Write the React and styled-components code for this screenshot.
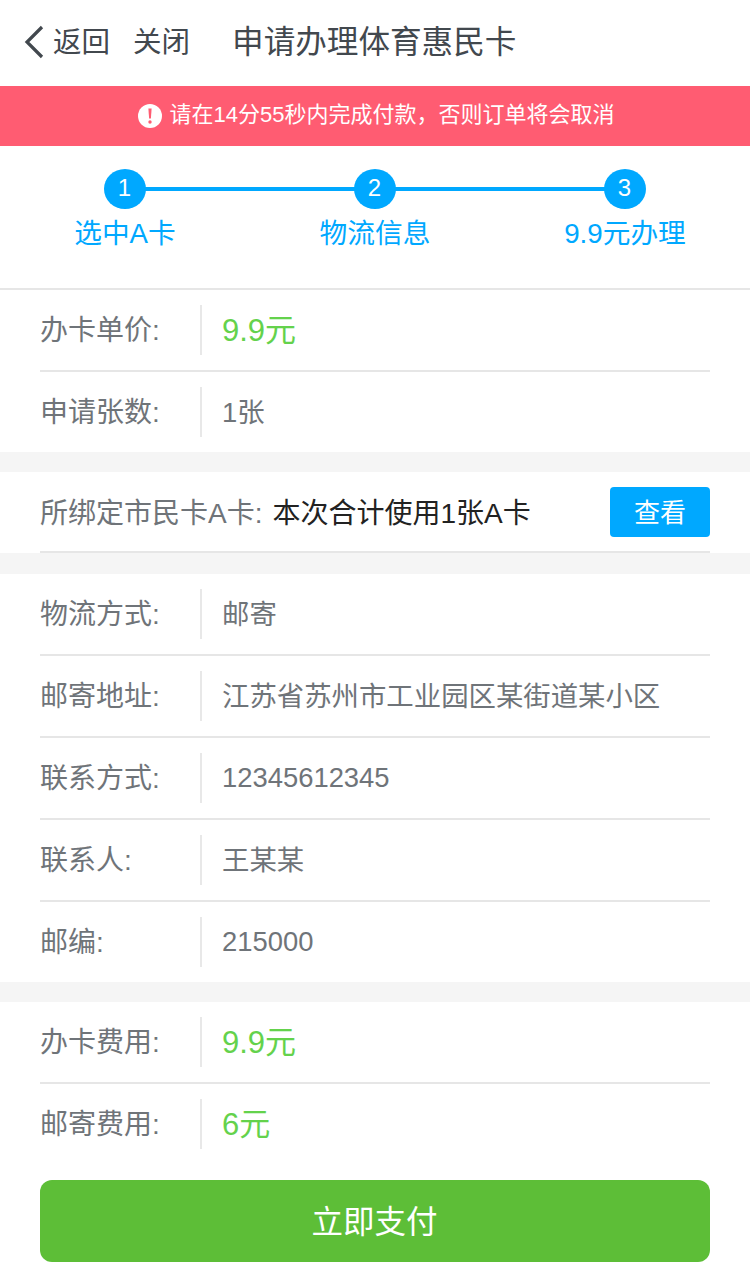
import React from "react";
import styled, { createGlobalStyle } from "styled-components";

const Global = createGlobalStyle`
  html, body { margin: 0; padding: 0; background: #fff; }
  body { font-family: "Liberation Sans", "Noto Sans CJK SC", sans-serif; }
  * { box-sizing: border-box; }
`;

const Page = styled.div`
  width: 750px;
  height: 1276px;
  overflow: hidden;
  background: #fff;
`;

const Header = styled.header`
  height: 86px;
  display: flex;
  align-items: center;
  padding: 0 0 2px 24px;
  color: #42484e;
`;

const BackIcon = styled.svg`
  width: 20px;
  height: 34px;
  margin-right: 9px;
  flex: none;
`;

const HeaderLink = styled.span`
  font-size: 28.5px;
  line-height: 40px;
  margin-right: ${(p) => p.$gap}px;
`;

const Title = styled.h1`
  margin: 0;
  font-size: 31.6px;
  line-height: 40px;
  font-weight: 400;
`;

const Banner = styled.div`
  height: 60px;
  background: #ff5c72;
  color: #fff;
  font-size: 22px;
  display: flex;
  align-items: center;
  justify-content: center;
  gap: 8px;
  padding-left: 2px;
`;

const AlertIcon = styled.svg`
  width: 24px;
  height: 24px;
  flex: none;
`;

const BannerText = styled.span`
  padding-bottom: 8px;
`;

const Steps = styled.section`
  height: 144px;
  border-bottom: 2px solid #e6e6e6;
  padding: 23px 0 0;
  display: grid;
  grid-template-columns: repeat(3, 250px);
`;

const Step = styled.div`
  display: flex;
  flex-direction: column;
  align-items: center;
  color: #00a8ff;
  position: relative;
`;

const Connector = styled.span`
  position: absolute;
  top: 18px;
  left: 50%;
  width: 250px;
  height: 4px;
  background: #00a8ff;
`;

const Dot = styled.span`
  width: 42px;
  height: 40px;
  border-radius: 50%;
  background: #00a8ff;
  color: #fff;
  font-size: 24px;
  padding: 0 1px 2px 0;
  display: flex;
  align-items: center;
  justify-content: center;
  position: relative;
  z-index: 1;
`;

const StepLabel = styled.span`
  font-size: 27.7px;
  line-height: 40px;
  margin-top: 5px;
  white-space: nowrap;
`;

const Group = styled.section`
  background: #fff;
  padding: 0 40px;
`;

const Gap = styled.div`
  height: ${(p) => p.$h}px;
  background: #f5f5f5;
`;

const Row = styled.div`
  height: ${(p) => (p.$last ? "80px" : "82px")};
  display: flex;
  align-items: center;
  border-bottom: ${(p) => (p.$last ? "0" : "2px solid #e6e6e6")};
`;

const Label = styled.span`
  width: 162px;
  height: 50px;
  flex: none;
  display: flex;
  align-items: center;
  font-size: 28px;
  padding-bottom: 5px;
  color: #6f7479;
  border-right: 2px solid #e8e8e8;
`;

const Value = styled.span`
  padding-left: 20px;
  padding-bottom: ${(p) => (p.$digits ? "1px" : "5px")};
  font-size: ${(p) => (p.$green ? "31px" : "27.4px")};
  color: ${(p) => (p.$green ? "#64d24c" : "#6f7479")};
`;

const CardRow = styled(Row)`
  justify-content: space-between;
  height: 81px;
`;

const CardText = styled.span`
  font-size: 28px;
  padding-bottom: 2px;
  color: #6f7479;
  white-space: nowrap;
`;

const CardValue = styled.span`
  color: #222;
  margin-left: 10px;
`;

const ViewButton = styled.button`
  width: 100px;
  height: 50px;
  border: 0;
  border-radius: 4px;
  background: #00a8ff;
  color: #fff;
  font: inherit;
  font-size: 26px;
  padding: 0 0 3px;
`;

const PayWrap = styled.div`
  padding: 16px 40px 0;
`;

const PayButton = styled.button`
  display: block;
  width: 100%;
  height: 82px;
  border: 0;
  border-radius: 12px;
  background: #5dbe37;
  color: #fff;
  font: inherit;
  font-size: 31.5px;
  padding: 0 1px 5px 0;
`;

const steps = ["选中A卡", "物流信息", "9.9元办理"];

const InfoRow = ({ label, value, green, digits, last }) => (
  <Row $last={last}>
    <Label>{label}</Label>
    <Value $green={green} $digits={digits}>{value}</Value>
  </Row>
);

export default function App() {
  return (
    <Page>
      <Global />
      <Header>
        <BackIcon viewBox="0 0 20 34" aria-hidden="true">
          <path d="M18 2 L3 17 L18 32" fill="none" stroke="#42484e" strokeWidth="3.2" />
        </BackIcon>
        <HeaderLink $gap={23}>返回</HeaderLink>
        <HeaderLink $gap={42}>关闭</HeaderLink>
        <Title>申请办理体育惠民卡</Title>
      </Header>
      <Banner>
        <AlertIcon viewBox="0 0 24 24" aria-hidden="true">
          <circle cx="12" cy="12" r="12" fill="#fff" />
          <path d="M10.4 4.5h3.2l-.7 10h-1.8z" fill="#ff5c72" />
          <circle cx="12" cy="18" r="1.7" fill="#ff5c72" />
        </AlertIcon>
        <BannerText>请在14分55秒内完成付款，否则订单将会取消</BannerText>
      </Banner>
      <Steps>
        {steps.map((s, i) => (
          <Step key={s}>
            {i < 2 && <Connector />}
            <Dot>{i + 1}</Dot>
            <StepLabel>{s}</StepLabel>
          </Step>
        ))}
      </Steps>
      <Group>
        <InfoRow label="办卡单价:" value="9.9元" green />
        <InfoRow label="申请张数:" value="1张" last />
      </Group>
      <Gap $h={20} />
      <Group>
        <CardRow>
          <CardText>
            所绑定市民卡A卡:<CardValue>本次合计使用1张A卡</CardValue>
          </CardText>
          <ViewButton>查看</ViewButton>
        </CardRow>
      </Group>
      <Gap $h={21} />
      <Group>
        <InfoRow label="物流方式:" value="邮寄" />
        <InfoRow label="邮寄地址:" value="江苏省苏州市工业园区某街道某小区" />
        <InfoRow label="联系方式:" value="12345612345" digits />
        <InfoRow label="联系人:" value="王某某" />
        <InfoRow label="邮编:" value="215000" digits last />
      </Group>
      <Gap $h={20} />
      <Group>
        <InfoRow label="办卡费用:" value="9.9元" green />
        <InfoRow label="邮寄费用:" value="6元" green last />
      </Group>
      <PayWrap>
        <PayButton>立即支付</PayButton>
      </PayWrap>
    </Page>
  );
}
